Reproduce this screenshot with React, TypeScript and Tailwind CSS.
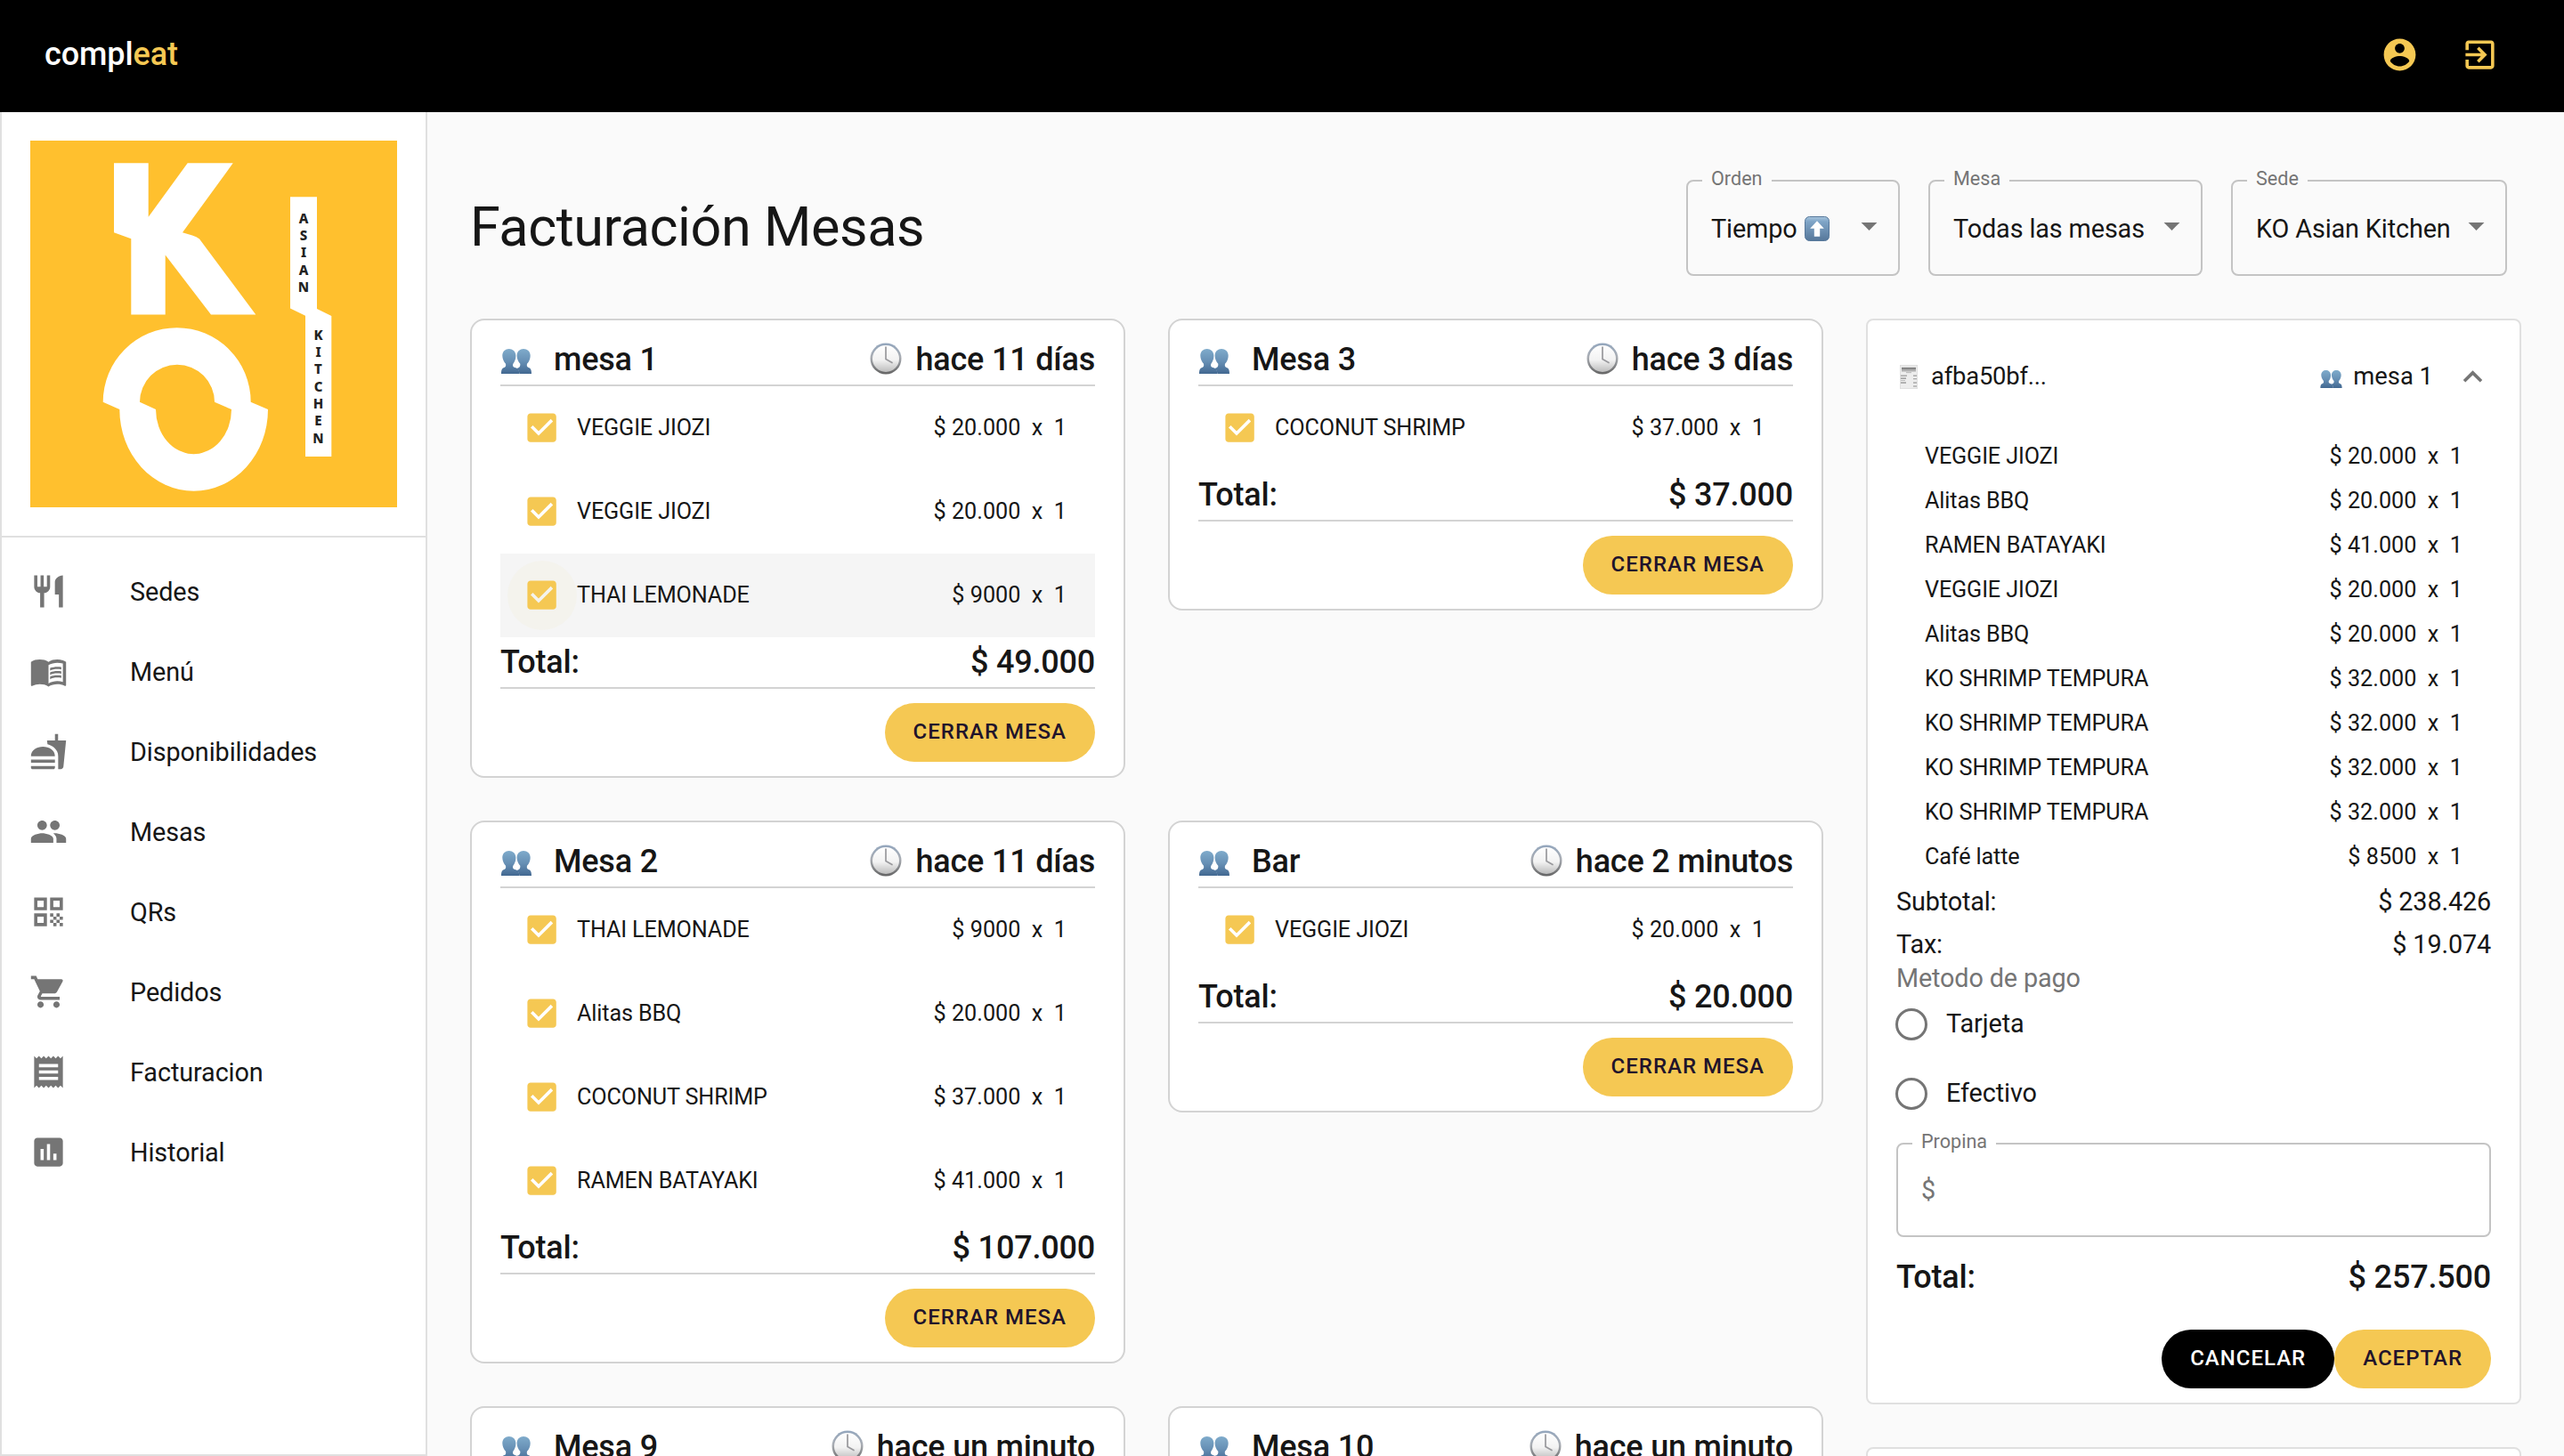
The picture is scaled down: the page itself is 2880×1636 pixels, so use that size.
import type { ReactNode } from "react";
import type { IconType } from "react-icons";
import {
  MdRestaurant,
  MdMenuBook,
  MdFastfood,
  MdPeople,
  MdQrCode,
  MdShoppingCart,
  MdReceipt,
  MdAssessment,
  MdArrowDropDown,
  MdExpandLess,
} from "react-icons/md";

type Line = { name: string; price: string; hovered?: boolean };
type Table = { name: string; age: string; lines?: Line[]; total?: string };

const NAV: { label: string; Icon: IconType }[] = [
  { label: "Sedes", Icon: MdRestaurant },
  { label: "Menú", Icon: MdMenuBook },
  { label: "Disponibilidades", Icon: MdFastfood },
  { label: "Mesas", Icon: MdPeople },
  { label: "QRs", Icon: MdQrCode },
  { label: "Pedidos", Icon: MdShoppingCart },
  { label: "Facturacion", Icon: MdReceipt },
  { label: "Historial", Icon: MdAssessment },
];

const TABLES: Table[] = [
  {
    name: "mesa 1",
    age: "hace 11 días",
    lines: [
      { name: "VEGGIE JIOZI", price: "$ 20.000" },
      { name: "VEGGIE JIOZI", price: "$ 20.000" },
      { name: "THAI LEMONADE", price: "$ 9000", hovered: true },
    ],
    total: "$ 49.000",
  },
  {
    name: "Mesa 3",
    age: "hace 3 días",
    lines: [{ name: "COCONUT SHRIMP", price: "$ 37.000" }],
    total: "$ 37.000",
  },
  {
    name: "Mesa 2",
    age: "hace 11 días",
    lines: [
      { name: "THAI LEMONADE", price: "$ 9000" },
      { name: "Alitas BBQ", price: "$ 20.000" },
      { name: "COCONUT SHRIMP", price: "$ 37.000" },
      { name: "RAMEN BATAYAKI", price: "$ 41.000" },
    ],
    total: "$ 107.000",
  },
  {
    name: "Bar",
    age: "hace 2 minutos",
    lines: [{ name: "VEGGIE JIOZI", price: "$ 20.000" }],
    total: "$ 20.000",
  },
  { name: "Mesa 9", age: "hace un minuto" },
  { name: "Mesa 10", age: "hace un minuto" },
];

const BILL: Line[] = [
  { name: "VEGGIE JIOZI", price: "$ 20.000" },
  { name: "Alitas BBQ", price: "$ 20.000" },
  { name: "RAMEN BATAYAKI", price: "$ 41.000" },
  { name: "VEGGIE JIOZI", price: "$ 20.000" },
  { name: "Alitas BBQ", price: "$ 20.000" },
  { name: "KO SHRIMP TEMPURA", price: "$ 32.000" },
  { name: "KO SHRIMP TEMPURA", price: "$ 32.000" },
  { name: "KO SHRIMP TEMPURA", price: "$ 32.000" },
  { name: "KO SHRIMP TEMPURA", price: "$ 32.000" },
  { name: "Café latte", price: "$ 8500" },
];

function PeopleEmoji({ className }: { className: string }) {
  return (
    <svg viewBox="0 0 34 28" className={className} aria-hidden="true">
      <defs>
        <linearGradient id="bust" x1="0" y1="0" x2="0" y2="28" gradientUnits="userSpaceOnUse">
          <stop offset="0" stopColor="#7fabcb" />
          <stop offset="0.5" stopColor="#6790b5" />
          <stop offset="1" stopColor="#426891" />
        </linearGradient>
      </defs>
      <path
        fill="url(#bust)"
        d="M8.700 0C12.700 0 16.400 2.800 16.400 7.700c0 3.600-1.300 6.900-3.200 9.200-.5 2.400.2 3.400 2.200 4.100 2.600.9 5 2.300 5 7H0c0-4.600 1-6.200 3.400-7 1.700-.6 2.100-1.900 1.600-4.200C3 14.500 1.300 11 1.300 7.700 1.300 2.800 4.800 0 8.700 0Z"
      />
      <path
        fill="url(#bust)"
        d="M25 0C29.200 0 32.700 2.800 32.700 7.700c0 3.500-1.500 6.800-3.700 9.100-.5 2.300-.1 3.600 1.600 4.200 2.400.8 3.400 2.400 3.400 7H20.500c-.4-3-1.500-4.700-3.400-6 2.700-.7 4.600-1.300 4.200-5.200-2-2.300-3.700-5.500-3.700-9.100C17.600 2.800 21.100 0 25 0Z"
      />
    </svg>
  );
}

function ClockEmoji({ className }: { className: string }) {
  return (
    <svg viewBox="0 0 36 36" className={className} aria-hidden="true">
      <defs>
        <linearGradient id="rim" x1="0" y1="0" x2="0" y2="1">
          <stop offset="0" stopColor="#93a6bd" />
          <stop offset="0.45" stopColor="#a9adb3" />
          <stop offset="1" stopColor="#636363" />
        </linearGradient>
        <linearGradient id="face" x1="0" y1="0" x2="0" y2="1">
          <stop offset="0" stopColor="#ffffff" />
          <stop offset="0.55" stopColor="#f2f2f2" />
          <stop offset="1" stopColor="#bcbcbc" />
        </linearGradient>
      </defs>
      <circle cx="18" cy="18" r="17.500" fill="url(#rim)" />
      <circle cx="18" cy="18" r="15" fill="url(#face)" />
      <path d="M18 5v13.500l7 4" fill="none" stroke="#98989c" strokeWidth="1.700" strokeLinecap="round" />
    </svg>
  );
}

function ReceiptEmoji({ className }: { className: string }) {
  return (
    <svg viewBox="0 0 20 27" className={className} aria-hidden="true">
      <rect x="0" y="0" width="20" height="27" fill="#ededed" />
      <rect x="0.400" y="0.400" width="19.200" height="26.200" fill="none" stroke="#dcdcdc" strokeWidth="0.800" />
      <g fill="#6b6b6b">
        <rect x="2" y="2.800" width="16" height="2.800" opacity="0.800" />
        <rect x="2" y="6.400" width="16" height="0.900" opacity="0.800" />
        <rect x="7" y="8.300" width="6" height="0.800" opacity="0.500" />
        <rect x="1" y="11.500" width="7" height="1.300" opacity="0.600" />
        <rect x="15" y="11.500" width="4" height="1.300" opacity="0.600" />
        <rect x="1" y="14.500" width="6" height="1.300" opacity="0.700" />
        <rect x="15" y="15" width="4" height="1.300" opacity="0.500" />
        <rect x="1" y="17" width="5" height="0.900" opacity="0.400" />
        <rect x="1" y="19.400" width="6" height="1.300" opacity="0.700" />
        <rect x="15" y="19.400" width="4" height="1.300" opacity="0.600" />
        <rect x="15" y="23.400" width="4" height="1.200" opacity="0.600" />
      </g>
    </svg>
  );
}

function UpEmoji({ className }: { className: string }) {
  return (
    <svg viewBox="0 0 28 28" className={className} aria-hidden="true">
      <defs>
        <linearGradient id="key" x1="0" y1="0" x2="0" y2="1">
          <stop offset="0" stopColor="#a9c6de" />
          <stop offset="0.200" stopColor="#7fa5c7" />
          <stop offset="1" stopColor="#56779a" />
        </linearGradient>
      </defs>
      <rect x="0.500" y="0.500" width="27" height="27" rx="5" fill="url(#key)" stroke="#57789b" />
      <path d="M14 5.200l7.800 8.600h-4.600v9h-6.400v-9H6.200z" fill="#fff" />
    </svg>
  );
}

function KoLogo() {
  return (
    <svg viewBox="0 0 412 412" className="block size-[412px]" role="img" aria-label="KO Asian Kitchen">
      <rect width="412" height="412" fill="#ffc02e" />
      <g fill="#fff">
        <path d="M94 25.300H132.700V85.700L176.700 25.300H227.700L171 103.200L182 106.500Q187 108 190 110.600L253.300 195.500H203L151.700 128.500V195.500H113.300V110.200L94 103.200Z" />
        <path
          fillRule="evenodd"
          d="M81.700 293.800A83 83.600 0 0 1 247.700 293.800L267 302A83.300 91.800 0 0 1 100.300 302ZM123 293.800L141 302A42.500 50.200 0 0 0 226 302L207 293.800A42 42 0 0 0 123 293.800Z"
        />
        <path d="M292 63.200H322V189L338.300 197V355H309V196.700L292 188.500Z" />
      </g>
      <g fill="#222" fontFamily="'Noto Sans', sans-serif" fontWeight="800" fontSize="15" textAnchor="middle">
        {"ASIAN".split("").map((c, i) => (
          <text key={i} x="307" y={92.800 + i * 19.300}>
            {c}
          </text>
        ))}
        {"KITCHEN".split("").map((c, i) => (
          <text key={i} x="323.500" y={223.800 + i * 19.300}>
            {c}
          </text>
        ))}
      </g>
    </svg>
  );
}

function TopBar() {
  return (
    <header className="flex h-[126px] shrink-0 items-center justify-between bg-black pr-[73px] pb-1 pl-[50px]">
      <div className="text-[36px] leading-[48px] font-medium tracking-[-0.1px] text-white">
        compl<span className="text-[#f5c853]">eat</span>
      </div>
      <div className="flex items-center gap-[47px] text-[#f5c853]">
        <svg viewBox="0 0 24 24" fill="currentColor" className="size-[43px]" aria-label="Cuenta">
          <path d="M12 2C6.480 2 2 6.480 2 12s4.480 10 10 10 10-4.480 10-10S17.520 2 12 2zm0 3c1.660 0 3 1.340 3 3s-1.340 3-3 3-3-1.340-3-3 1.340-3 3-3zm0 14.200c-2.500 0-4.710-1.280-6-3.220.03-1.990 4-3.080 6-3.080 1.990 0 5.970 1.090 6 3.080-1.290 1.940-3.500 3.220-6 3.220z" />
        </svg>
        <svg viewBox="0 0 24 24" fill="currentColor" className="size-[43px]" aria-label="Salir">
          <path d="M10.090 15.590L11.500 17l5-5-5-5-1.410 1.410L12.670 11H3v2h9.670l-2.580 2.590zM19 3H5c-1.110 0-2 .9-2 2v4h2V5h14v14H5v-4H3v4c0 1.100.89 2 2 2h14c1.100 0 2-.9 2-2V5c0-1.100-.9-2-2-2z" />
        </svg>
      </div>
    </header>
  );
}

function Sidebar() {
  return (
    <aside className="w-[480px] shrink-0 border-x-2 border-b-2 border-[#e0e0e0] bg-white">
      <div className="border-b-2 border-[#e0e0e0] p-8">
        <KoLogo />
      </div>
      <nav className="pt-4">
        {NAV.map(({ label, Icon }) => (
          <a key={label} className="flex h-[90px] items-center pl-[31px]">
            <span className="w-[113px] pb-px">
              <Icon className="size-[43px] text-[#757575]" />
            </span>
            <span className="text-[28.8px] leading-[42px] tracking-[-0.1px]">{label}</span>
          </a>
        ))}
      </nav>
    </aside>
  );
}

function Select({ label, width, children }: { label: string; width: string; children: ReactNode }) {
  return (
    <div
      className={`relative flex h-[108px] items-center justify-between rounded-lg border-2 border-[#c4c4c4] pr-[11px] pl-[26px] ${width}`}
    >
      <span className="absolute top-[-17px] left-4 bg-[#fafafa] px-2.5 text-[21.6px] leading-7 text-[#757575]">
        {label}
      </span>
      <span className="flex items-center gap-2 pt-px text-[28.8px] leading-9 tracking-[-0.12px] whitespace-nowrap">
        {children}
      </span>
      <MdArrowDropDown className="mb-1.5 size-[43px] shrink-0 text-[#757575]" />
    </div>
  );
}

function PillButton({ dark, children }: { dark?: boolean; children: ReactNode }) {
  return (
    <button
      className={`h-[66px] rounded-full px-8 pb-[3px] text-2xl leading-none font-medium tracking-[1px] ${
        dark ? "bg-black text-white" : "bg-[#f5c853] text-[#21132b]"
      }`}
    >
      {children}
    </button>
  );
}

function Checkbox({ hovered }: { hovered?: boolean }) {
  return (
    <span className={`flex size-[78px] items-center justify-center rounded-full ${hovered ? "bg-[#f4f3ed]" : ""}`}>
      <svg viewBox="0 0 24 24" className="size-[43.2px]" fill="#f5c853" aria-label="Seleccionado">
        <path d="M19 3H5c-1.110 0-2 .9-2 2v14c0 1.100.89 2 2 2h14c1.110 0 2-.9 2-2V5c0-1.100-.89-2-2-2zm-9 14l-5-5 1.410-1.410L10 14.170l7.590-7.590L19 8l-9 9z" />
      </svg>
    </span>
  );
}

function TableCard({ table }: { table: Table }) {
  return (
    <section className="flex min-h-[328px] flex-col rounded-2xl border-2 border-[#d3d3d3] bg-white px-8 py-4">
      <div className="flex h-[58px] items-center justify-between border-b-2 border-[#d3d3d3] text-[36px] font-medium tracking-[-0.2px]">
        <span className="flex items-center">
          <PeopleEmoji className="mt-1 mr-[25px] ml-px h-7 w-[34px]" />
          {table.name}
        </span>
        <span className="flex items-center">
          <ClockEmoji className="mr-[15px] mb-[3px] size-9" />
          {table.age}
        </span>
      </div>
      {table.lines?.map((line, i) => (
        <div
          key={i}
          className={`flex h-[94px] items-center pr-8 pl-2 text-[25.2px] ${line.hovered ? "bg-[#f5f5f5]" : ""}`}
        >
          <Checkbox hovered={line.hovered} />
          <span className="grow tracking-[-0.13px]">{line.name}</span>
          <span className="whitespace-pre">{line.price + "  x  1"}</span>
        </div>
      ))}
      {table.total && (
        <>
          <div className="flex h-[58px] items-center justify-between border-b-2 border-[#d3d3d3] text-[36px] font-medium tracking-[-0.2px]">
            <span>Total:</span>
            <span>{table.total}</span>
          </div>
          <div className="flex justify-end pt-4">
            <PillButton>CERRAR MESA</PillButton>
          </div>
        </>
      )}
    </section>
  );
}

function Radio({ label }: { label: string }) {
  return (
    <label className="-ml-px flex h-[78px] items-center gap-[21px] text-[28.8px]">
      <span className="size-9 rounded-full border-[3.600px] border-[#757575]" />
      <span className="tracking-[-0.1px]">{label}</span>
    </label>
  );
}

function BillPanel() {
  return (
    <section className="flex flex-col rounded-lg border-2 border-[#e0e0e0] bg-white px-8 pb-4">
      <div className="flex h-[127px] items-center text-[27.400px]">
        <ReceiptEmoji className="mr-[15px] ml-1 h-[27px] w-5" />
        <span className="grow tracking-[-0.2px]">afba50bf...</span>
        <PeopleEmoji className="mt-1 mr-3 h-5 w-[25px]" />
        <span>mesa 1</span>
        <MdExpandLess className="-mr-px ml-[23px] size-[43px] text-[#757575]" />
      </div>
      {BILL.map((line, i) => (
        <div key={i} className="flex h-[50px] items-center justify-between px-8 pt-0.5 text-[25.2px]">
          <span className="tracking-[-0.13px]">{line.name}</span>
          <span className="whitespace-pre">{line.price + "  x  1"}</span>
        </div>
      ))}
      <div className="flex h-[50px] items-center justify-between pt-[3px] text-[28.8px] tracking-[-0.15px]">
        <span>Subtotal:</span>
        <span>$ 238.426</span>
      </div>
      <div className="flex h-[46px] items-center justify-between pt-[3px] text-[28.8px] tracking-[-0.15px]">
        <span>Tax:</span>
        <span>$ 19.074</span>
      </div>
      <div className="h-[29px] text-[28.8px] leading-[32px] tracking-[-0.15px] text-[#757575]">Metodo de pago</div>
      <Radio label="Tarjeta" />
      <Radio label="Efectivo" />
      <div className="relative mt-4 flex h-[106px] items-center rounded-lg border-2 border-[#c4c4c4] pl-[26px] text-[28.8px] text-[#757575]">
        <span className="absolute top-[-17px] left-4 bg-white px-2.5 text-[21.6px] leading-7">Propina</span>
        <span className="pt-0.5">$</span>
      </div>
      <div className="mt-4 flex h-14 items-center justify-between pt-px text-[36px] font-medium tracking-[-0.2px]">
        <span>Total:</span>
        <span>$ 257.500</span>
      </div>
      <div className="mt-8 flex justify-end">
        <PillButton dark>CANCELAR</PillButton>
        <PillButton>ACEPTAR</PillButton>
      </div>
    </section>
  );
}

export default function App() {
  return (
    <div className="flex h-[1636px] w-[2880px] flex-col overflow-hidden bg-[#fafafa] font-['Roboto',sans-serif] text-[#161616]">
      <TopBar />
      <div className="flex min-h-0 grow">
        <Sidebar />
        <main className="grow overflow-hidden px-12 pt-[76px]">
          <div className="mb-12 flex h-[108px] items-center justify-between pr-4">
            <h1 className="text-[61.2px] leading-none tracking-[-0.45px]">Facturación Mesas</h1>
            <div className="flex gap-8">
              <Select label="Orden" width="w-[240px]">
                Tiempo
                <UpEmoji className="size-7" />
              </Select>
              <Select label="Mesa" width="w-[308px]">
                Todas las mesas
              </Select>
              <Select label="Sede" width="w-[310px]">
                KO Asian Kitchen
              </Select>
            </div>
          </div>
          <div className="flex items-start gap-12">
            <div className="grid w-[1520px] grid-cols-2 items-start gap-12">
              {TABLES.map((table) => (
                <TableCard key={table.name} table={table} />
              ))}
            </div>
            <div className="flex w-[736px] flex-col gap-12">
              <BillPanel />
              <section className="h-40 rounded-lg border-2 border-[#e0e0e0] bg-white" />
            </div>
          </div>
        </main>
      </div>
    </div>
  );
}
